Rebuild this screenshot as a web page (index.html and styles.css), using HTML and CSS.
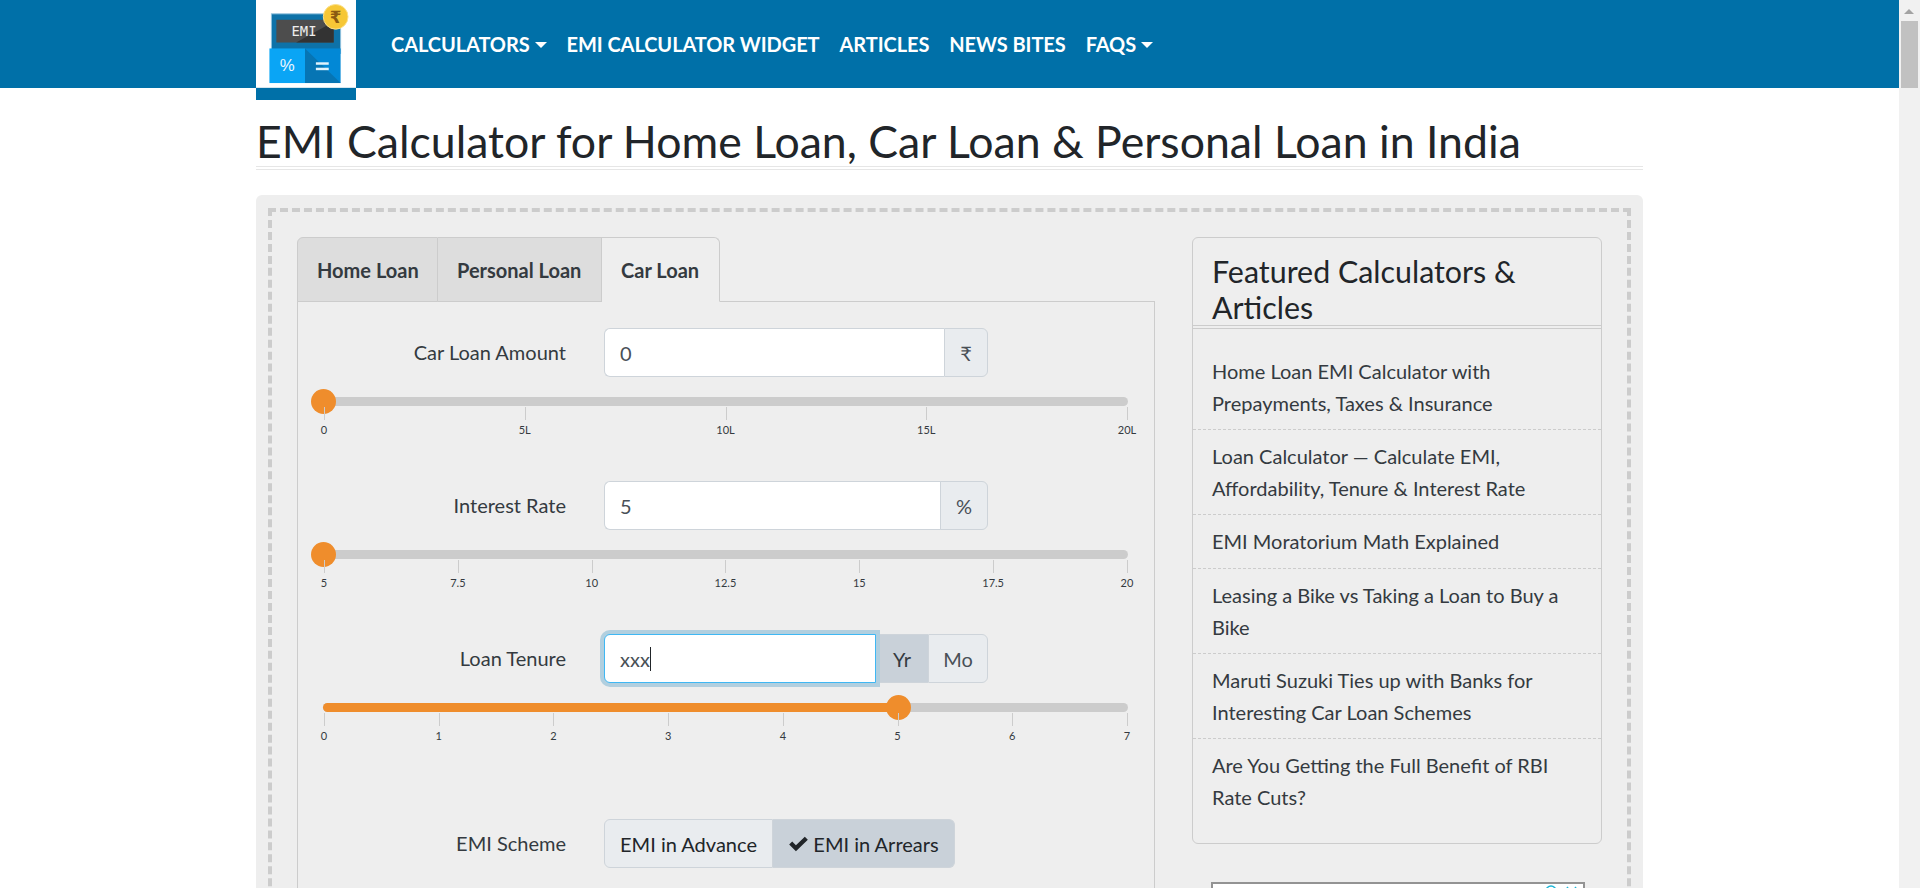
FILE: index.html
```html
<!DOCTYPE html>
<html lang="en">

<head>
    <meta charset="UTF-8">
    <title>EMI Calculator</title>
    <link rel="stylesheet" href="styles.css">
</head>

<body>
    <div class="window">
        <div class="page">
            <!-- header -->
            <header class="topbar">
                <div class="container topbar-inner">
                    <a class="logo" href="#">
                        <svg width="100" height="88" viewBox="0 0 100 88">
                            <rect x="15" y="14" width="70" height="40" fill="#0e72a8" stroke="#8fc0dc"/>
                            <rect x="20" y="20" width="58" height="23" fill="#4d4d4d"/>
                            <path d="M40 43 L78 22 L78 43 Z" fill="#333"/>
                            <text x="48" y="36" class="logo-emi">EMI</text>
                            <rect x="13" y="49" width="36" height="35" fill="#0aa5f5"/>
                            <rect x="49" y="49" width="36" height="35" fill="#0288d6"/>
                            <path d="M49 49 L85 84 L49 84 Z" fill="#0675b4"/>
                            <text x="31" y="72" class="logo-pct">%</text>
                            <rect x="60" y="63" width="13" height="2.5" fill="#dff2fc"/>
                            <rect x="60" y="68.5" width="13" height="2.5" fill="#dff2fc"/>
                            <circle cx="80" cy="17" r="12.5" fill="#f6c736" stroke="#fbe08a"/>
                            <text x="80" y="23" class="logo-rupee">₹</text>
                        </svg>
                    </a>
                    <nav class="mainnav">
                        <a href="#" class="caret">CALCULATORS</a>
                        <a href="#">EMI CALCULATOR WIDGET</a>
                        <a href="#">ARTICLES</a>
                        <a href="#">NEWS BITES</a>
                        <a href="#" class="caret">FAQS</a>
                    </nav>
                </div>
            </header>

            <main class="container">
                <h1 class="page-title">EMI Calculator for Home Loan, Car Loan &amp; Personal Loan in India</h1>

                <div class="panel">
                    <div class="panel-dashed">
                        <section class="calc">
                            <ul class="tabs">
                                <li>Home Loan</li>
                                <li>Personal Loan</li>
                                <li class="active">Car Loan</li>
                            </ul>
                            <div class="tab-body">
                                <!-- amount -->
                                <div class="field">
                                    <label>Car Loan Amount</label>
                                    <div class="input-group">
                                        <input class="text-input" type="text" value="0">
                                        <span class="addon">₹</span>
                                    </div>
                                </div>
                                <div class="slider">
                                    <div class="track"><span class="handle handle-start"></span></div>
                                    <div class="scale">
                                        <span>0</span><span>5L</span><span>10L</span><span>15L</span><span>20L</span>
                                    </div>
                                </div>

                                <!-- interest -->
                                <div class="field">
                                    <label>Interest Rate</label>
                                    <div class="input-group">
                                        <input class="text-input" type="text" value="5">
                                        <span class="addon addon-wide">%</span>
                                    </div>
                                </div>
                                <div class="slider">
                                    <div class="track"><span class="handle handle-start"></span></div>
                                    <div class="scale">
                                        <span>5</span><span>7.5</span><span>10</span><span>12.5</span><span>15</span><span>17.5</span><span>20</span>
                                    </div>
                                </div>

                                <!-- tenure -->
                                <div class="field">
                                    <label>Loan Tenure</label>
                                    <div class="input-group">
                                        <div class="focus-input">xxx<span class="cursor"></span></div>
                                        <span class="addon addon-on">Yr</span>
                                        <span class="addon">Mo</span>
                                    </div>
                                </div>
                                <div class="slider">
                                    <div class="track">
                                        <div class="fill" style="width: 71.6%"><span class="handle handle-end"></span></div>
                                    </div>
                                    <div class="scale">
                                        <span>0</span><span>1</span><span>2</span><span>3</span><span>4</span><span>5</span><span>6</span><span>7</span>
                                    </div>
                                </div>

                                <!-- scheme -->
                                <div class="field field-scheme">
                                    <label>EMI Scheme</label>
                                    <div class="input-group">
                                        <span class="addon scheme">EMI in Advance</span>
                                        <span class="addon addon-on scheme">
                                            <svg class="check" width="21" height="16" viewBox="0 0 18 14" preserveAspectRatio="none"><path d="M1 7.5 L3.6 4.9 L6.8 8.1 L14.4 .6 L17 3.2 L6.8 13.4 Z" fill="#212529"/></svg>
                                            EMI in Arrears
                                        </span>
                                    </div>
                                </div>
                            </div>
                        </section>

                        <aside class="side">
                            <div class="side-card">
                                <h2>Featured Calculators &amp; Articles</h2>
                                <ul class="side-list">
                                    <li>Home Loan EMI Calculator with Prepayments, Taxes &amp; Insurance</li>
                                    <li>Loan Calculator — Calculate EMI, Affordability, Tenure &amp; Interest Rate</li>
                                    <li>EMI Moratorium Math Explained</li>
                                    <li>Leasing a Bike vs Taking a Loan to Buy a Bike</li>
                                    <li>Maruti Suzuki Ties up with Banks for Interesting Car Loan Schemes</li>
                                    <li>Are You Getting the Full Benefit of RBI Rate Cuts?</li>
                                </ul>
                            </div>
                            <div class="ad-box">
                                <svg class="ad-icon" width="40" height="8" viewBox="0 0 40 8">
                                    <circle cx="8" cy="7" r="5" fill="none" stroke="#1cb5d6" stroke-width="1.5"/>
                                    <path d="M24 3 L27 7 M30 7 L33 3" stroke="#1cb5d6" stroke-width="1.5"/>
                                </svg>
                            </div>
                        </aside>
                    </div>
                </div>
            </main>
        </div>

        <!-- scrollbar -->
        <div class="scrollbar">
            <span class="scroll-arrow"></span>
            <span class="scroll-thumb"></span>
        </div>
    </div>
</body>

</html>
```

FILE: styles.css
```css
* {
    box-sizing: border-box;
}

html,
body {
    margin: 0;
    height: 100%;
    overflow: hidden;
}

body {
    font-family: Lato, "Liberation Sans", sans-serif;
    font-size: 20px;
    color: #212529;
    background-color: #fff;
}

.window {
    display: flex;
    height: 888px;
}

.page {
    flex: 1;
    min-width: 0;
    overflow: hidden;
}

.container {
    width: 1387px;
    margin-left: 256px;
}

/* header */
.topbar {
    height: 88px;
    background-color: #0070a8;
}

.topbar-inner {
    display: flex;
    align-items: flex-start;
    gap: 35px;
}

.logo {
    display: block;
    flex: none;
    width: 100px;
    height: 100px;
    background-color: #0070a8;
}

.logo svg {
    display: block;
    background-color: #fff;
    border-bottom: 1px solid #d5e6ef;
}

.logo-emi {
    font-family: "DejaVu Sans Mono", monospace;
    font-size: 14px;
    fill: #eee;
    text-anchor: middle;
}

.logo-pct {
    font-family: "Liberation Sans", sans-serif;
    font-size: 17px;
    fill: #eaf7ff;
    text-anchor: middle;
}

.logo-rupee {
    font-family: "DejaVu Sans", sans-serif;
    font-size: 17px;
    font-weight: 700;
    fill: #8a5a12;
    text-anchor: middle;
}

.mainnav {
    display: flex;
    gap: 20px;
    height: 88px;
    align-items: center;
}

.mainnav a {
    color: #fff;
    font-size: 20px;
    font-weight: 700;
    text-decoration: none;
    letter-spacing: -0.08px;
}

.caret::after {
    content: "";
    display: inline-block;
    margin-left: 5px;
    vertical-align: 4px;
    border-top: 6px solid #fff;
    border-left: 6px solid transparent;
    border-right: 6px solid transparent;
}

/* title */
.page-title {
    margin: 0 0 25px;
    height: 82px;
    padding-top: 26px;
    font-size: 44.6px;
    font-weight: 400;
    line-height: 53px;
    border-bottom: 4px double #e6e6e6;
    white-space: nowrap;
}

/* main panel */
.panel {
    height: 800px;
    padding: 13px 12px;
    background-color: #eee;
    border-radius: 6px;
}

.panel-dashed {
    display: flex;
    height: 100%;
    padding: 25px 25px 0 25px;
    border: 4px dashed #ccc;
    justify-content: space-between;
}

.calc {
    width: 858px;
}

/* tabs */
.tabs {
    display: flex;
    margin: 0;
    padding: 0;
    list-style: none;
    height: 65px;
    margin-bottom: -1px;
    position: relative;
}

.tabs li {
    width: 164px;
    padding: 20px 0 0 19px;
    font-weight: 700;
    color: #343a40;
    font-size: 20px;
    background-color: #ddd;
    border: 1px solid #ccc;
    border-left-width: 0;
}

.tabs li:first-child {
    width: 141px;
    border-left-width: 1px;
    border-top-left-radius: 6px;
}

.tabs li.active {
    width: 118px;
    background-color: #eee;
    border-bottom-color: #eee;
    border-top-right-radius: 6px;
}

.tab-body {
    height: 700px;
    padding: 26px 22px 0 19px;
    border: 1px solid #ccc;
}

/* form rows */
.field {
    display: flex;
    align-items: center;
    gap: 38px;
}

.field label {
    width: 249px;
    margin-top: -2px;
    text-align: right;
    color: #343a40;
    font-size: 20px;
}

.field-scheme {
    margin-top: 76px;
}

.input-group {
    display: flex;
    height: 49px;
}

.text-input {
    width: 340px;
    height: 49px;
    padding: 0 15px;
    font-family: inherit;
    font-size: 20px;
    color: #495057;
    background-color: #fff;
    border: 1px solid #ced4da;
    border-right-width: 0;
    border-radius: 6px 0 0 6px;
    outline: none;
}

.addon {
    display: flex;
    align-items: center;
    justify-content: center;
    width: 44px;
    font-size: 20px;
    color: #495057;
    background-color: #e9ecef;
    border: 1px solid #ced4da;
}

.input-group .addon:last-child {
    border-radius: 0 6px 6px 0;
}

.input-group .addon:first-child {
    border-radius: 6px 0 0 6px;
}

.addon-wide {
    width: 48px;
    margin-left: -4px;
    position: relative;
}

.addon-on {
    width: 52px;
    background-color: #c9d1d9;
    color: #343a40;
    border-left-width: 0;
    border-right-width: 0;
}

.addon-on + .addon {
    width: 60px;
}

.scheme {
    width: 169px;
    color: #212529;
}

.addon-on.scheme {
    width: 182px;
    gap: 4px;
    border-right-width: 1px;
}

.focus-input {
    position: relative;
    z-index: 1;
    display: flex;
    align-items: center;
    width: 272px;
    height: 49px;
    padding: 0 15px;
    font-size: 20px;
    color: #495057;
    background-color: #fff;
    border: 1px solid #3fb7f3;
    border-radius: 6px 0 0 6px;
    box-shadow: 0 0 0 4px #b1cfdf;
}

.cursor {
    width: 1px;
    height: 24px;
    background-color: #212529;
}

/* sliders */
.slider {
    margin-top: 20px;
    margin-bottom: 44px;
}

.track {
    position: relative;
    height: 9px;
    margin-left: 6px;
    width: 805px;
    background-color: #ccc;
    border-radius: 5px;
}

.fill {
    position: relative;
    height: 9px;
    background-color: #ef8d2c;
    border-radius: 5px 0 0 5px;
}

.handle {
    position: absolute;
    top: -8px;
    width: 25px;
    height: 25px;
    background-color: #ef8d2c;
    border-radius: 50%;
}

.handle-start {
    left: -12px;
}

.handle-end {
    right: -12px;
}

.scale {
    display: flex;
    justify-content: space-between;
    width: 803px;
    margin-left: 7px;
    margin-top: 1px;
}

.scale span {
    position: relative;
    width: 0;
    padding-top: 16px;
    display: flex;
    justify-content: center;
    font-size: 11px;
    line-height: 14px;
    color: #343a40;
    white-space: nowrap;
}

.scale span::before {
    content: "";
    position: absolute;
    top: 0;
    left: 0;
    width: 1px;
    height: 13px;
    background-color: #ccc;
}

/* side column */
.side {
    width: 410px;
}

.side-card {
    border: 1px solid #ccc;
    border-radius: 6px;
    height: 607px;
}

.side-card h2 {
    margin: 0;
    padding: 15px 19px 0;
    height: 91px;
    font-size: 30.4px;
    font-weight: 400;
    line-height: 36px;
    border-bottom: 4px double #ccc;
}

.side-list {
    margin: 0;
    padding: 16px 0 0;
    list-style: none;
}

.side-list li {
    padding: 10px 19px;
    font-size: 20px;
    line-height: 32px;
    color: #343a40;
    border-bottom: 1px dashed #ccc;
}

.side-list li:nth-child(3) {
    padding-bottom: 11px;
}

.side-list li:last-child {
    border-bottom: 0;
}

.ad-box {
    display: flex;
    justify-content: flex-end;
    height: 40px;
    width: 374px;
    margin: 38px 0 0 19px;
    background-color: #fff;
    border: 2px solid #939393;
    border-bottom: 0;
}

/* fake scrollbar, the reference has one drawn by the browser */
.scrollbar {
    position: relative;
    flex: none;
    width: 21px;
    background-color: #f1f1f1;
}

.scroll-arrow {
    position: absolute;
    top: 9px;
    left: 5px;
    border-bottom: 5px solid #a3a3a3;
    border-left: 5px solid transparent;
    border-right: 5px solid transparent;
}

.scroll-thumb {
    position: absolute;
    top: 21px;
    left: 2px;
    width: 17px;
    height: 67px;
    background-color: #c1c1c1;
}
```
